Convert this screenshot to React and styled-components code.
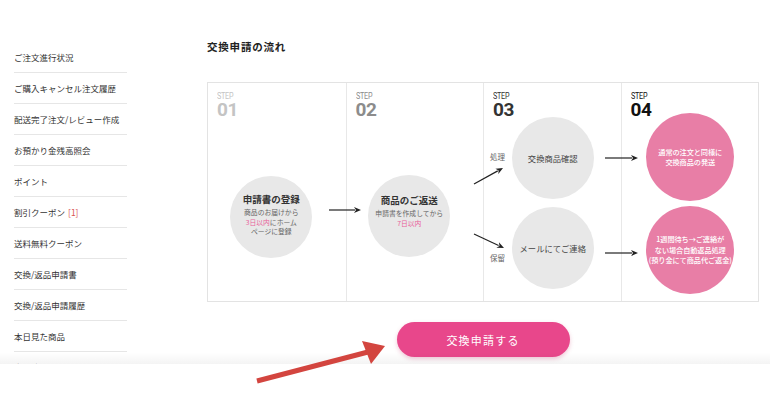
import React from "react";
import styled, { createGlobalStyle } from "styled-components";

const Global = createGlobalStyle`
  html, body { margin: 0; padding: 0; background: #fff; }
  body { font-family: "Noto Sans CJK JP", "Noto Sans", sans-serif; color: #333; }
`;

const Viewport = styled.div`
  width: 770px;
  height: 400px;
  position: relative;
  overflow: hidden;
  background: #fff;
`;

const Page = styled.div`
  height: 364px;
  overflow: hidden;
  display: flex;
  position: relative;
  &::after {
    content: "";
    position: absolute;
    left: 0;
    right: 0;
    bottom: 0;
    height: 12px;
    background: linear-gradient(to bottom, rgba(0,0,0,0), rgba(0,0,0,0.045));
  }
`;

const Sidebar = styled.ul`
  list-style: none;
  margin: 0 0 0 14px;
  padding: 42px 0 0;
  width: 113px;
  flex: none;
`;

const NavItem = styled.li`
  height: 30px;
  display: flex;
  align-items: center;
  border-bottom: 1px solid #e6e6e6;
  font-size: 8.5px;
  color: #333;
  white-space: nowrap;
`;

const Badge = styled.span`
  color: #d9534f;
  margin-left: 3px;
`;

const Main = styled.div`
  margin-left: 80px;
  width: 552px;
  padding-top: 40px;
  display: flex;
  flex-direction: column;
`;

const Title = styled.h2`
  margin: 0 0 28px;
  font-size: 10.5px;
  line-height: 14px;
  font-weight: 700;
  letter-spacing: 0.8px;
  color: #222;
`;

const FlowBox = styled.div`
  position: relative;
  height: 220px;
  box-sizing: border-box;
  border: 1px solid #e3e3e3;
  display: grid;
  grid-template-columns: repeat(4, 1fr);
`;

const Column = styled.div`
  display: flex;
  flex-direction: column;
  padding: 8px 8px 0 9px;
  border-left: ${(p) => (p.$first ? "none" : "1px solid #e8e8e8")};
  min-width: 0;
`;

const StepHead = styled.div`
  height: 28px;
  display: flex;
  flex-direction: column;
  align-items: flex-start;
  font-family: Roboto, "Liberation Sans", sans-serif;
  color: ${(p) => p.$color};
  position: relative;
  z-index: 1;
`;

const StepLabel = styled.span`
  display: block;
  height: 10px;
  font-size: 8.5px;
  line-height: 10px;
  letter-spacing: -0.3px;
  transform: scaleX(0.85);
  transform-origin: left;
`;

const StepNum = styled.span`
  display: block;
  height: 18px;
  font-size: 19px;
  line-height: 18px;
  font-weight: 700;
  letter-spacing: -0.3px;
`;

const Body = styled.div`
  display: flex;
  flex-direction: column;
  align-items: center;
  margin-top: ${(p) => p.$offset}px;
  gap: ${(p) => p.$gap || 0}px;
  padding-right: ${(p) => p.$shift || 0}px;
`;

const Circle = styled.div`
  width: ${(p) => p.$size}px;
  height: ${(p) => p.$size}px;
  border-radius: 50%;
  flex: none;
  background: ${(p) => (p.$pink ? "#e87ea6" : "#e8e8e8")};
  color: ${(p) => (p.$pink ? "#fff" : "#333")};
  display: flex;
  flex-direction: column;
  align-items: center;
  justify-content: center;
  text-align: center;
  box-sizing: border-box;
  padding: 0 4px;
`;

const CircleTitle = styled.div`
  font-size: 9.5px;
  font-weight: 700;
  line-height: 12px;
  color: #333;
  margin-bottom: 3px;
  margin-top: ${(p) => p.$mt || 0}px;
`;

const CircleSub = styled.div`
  font-size: 6.8px;
  line-height: 9.5px;
  color: #666;
  white-space: nowrap;
`;

const Em = styled.span`
  color: #e8609a;
`;

const CircleText = styled.div`
  font-size: 8.3px;
  line-height: 11px;
  color: #444;
  white-space: nowrap;
`;

const PinkText = styled.div`
  font-size: 7.2px;
  line-height: 10.5px;
  color: #fff;
  font-weight: 500;
  white-space: nowrap;
  letter-spacing: -0.1px;
`;

const Overlay = styled.svg`
  position: absolute;
  inset: 0;
  pointer-events: none;
  overflow: visible;
`;

const Tag = styled.span`
  position: absolute;
  left: ${(p) => p.$x}px;
  top: ${(p) => p.$y}px;
  font-size: 7.5px;
  line-height: 10px;
  color: #666;
  white-space: nowrap;
`;

const ButtonRow = styled.div`
  display: flex;
  justify-content: center;
  margin-top: 20px;
`;

const ApplyButton = styled.button`
  width: 173px;
  height: 35px;
  border: none;
  border-radius: 18px;
  background: #e8478b;
  color: #fff;
  font-family: "Noto Sans CJK JP", sans-serif;
  font-size: 11px;
  letter-spacing: 1.2px;
  box-shadow: 0 2px 4px rgba(200, 40, 100, 0.25);
  cursor: pointer;
`;

const Annotation = styled.svg`
  position: absolute;
  left: 0;
  top: 0;
  width: 770px;
  height: 400px;
  pointer-events: none;
`;

const navItems = [
  "ご注文進行状況",
  "ご購入キャンセル注文履歴",
  "配送完了注文/レビュー作成",
  "お預かり金残高照会",
  "ポイント",
  "割引クーポン",
  "送料無料クーポン",
  "交換/返品申請書",
  "交換/返品申請履歴",
  "本日見た商品",
  "会員情報修正",
];

function Arrow({ x1, y1, x2, y2 }) {
  const ang = Math.atan2(y2 - y1, x2 - x1);
  const len = 7;
  const w = 3;
  const bx = x2 - len * Math.cos(ang);
  const by = y2 - len * Math.sin(ang);
  const px = -Math.sin(ang) * w;
  const py = Math.cos(ang) * w;
  return (
    <g>
      <line x1={x1} y1={y1} x2={bx + 1 * Math.cos(ang)} y2={by + 1 * Math.sin(ang)} stroke="#222" strokeWidth="1.2" />
      <polygon
        points={`${x2},${y2} ${bx + px},${by + py} ${bx + 2 * Math.cos(ang)},${by + 2 * Math.sin(ang)} ${bx - px},${by - py}`}
        fill="#222"
      />
    </g>
  );
}

export default function App() {
  return (
    <Viewport>
      <Global />
      <Page>
        <Sidebar>
          {navItems.map((t) => (
            <NavItem key={t}>
              {t}
              {t === "割引クーポン" && <Badge>[1]</Badge>}
            </NavItem>
          ))}
        </Sidebar>
        <Main>
          <Title>交換申請の流れ</Title>
          <FlowBox>
            <Column $first>
              <StepHead $color="#c4c4c4">
                <StepLabel>STEP</StepLabel>
                <StepNum>01</StepNum>
              </StepHead>
              <Body $offset={57} $shift={12}>
                <Circle $size={82}>
                  <CircleTitle $mt={-4}>申請書の登録</CircleTitle>
                  <CircleSub>商品のお届けから</CircleSub>
                  <CircleSub>
                    <Em>3日以内</Em>にホーム
                  </CircleSub>
                  <CircleSub>ページに登録</CircleSub>
                </Circle>
              </Body>
            </Column>
            <Column>
              <StepHead $color="#8c8c8c">
                <StepLabel>STEP</StepLabel>
                <StepNum>02</StepNum>
              </StepHead>
              <Body $offset={56} $shift={12}>
                <Circle $size={82}>
                  <CircleTitle $mt={-10}>商品のご返送</CircleTitle>
                  <CircleSub>申請書を作成してから</CircleSub>
                  <CircleSub>
                    <Em>7日以内</Em>
                  </CircleSub>
                </Circle>
              </Body>
            </Column>
            <Column>
              <StepHead $color="#333">
                <StepLabel>STEP</StepLabel>
                <StepNum>03</StepNum>
              </StepHead>
              <Body $offset={-2} $gap={8}>
                <Circle $size={82}>
                  <CircleText>交換商品確認</CircleText>
                </Circle>
                <Circle $size={82}>
                  <CircleText>メールにてご連絡</CircleText>
                </Circle>
              </Body>
            </Column>
            <Column>
              <StepHead $color="#111">
                <StepLabel>STEP</StepLabel>
                <StepNum>04</StepNum>
              </StepHead>
              <Body $offset={-6} $gap={5}>
                <Circle $size={88} $pink>
                  <PinkText>通常の注文と同様に</PinkText>
                  <PinkText>交換商品の発送</PinkText>
                </Circle>
                <Circle $size={88} $pink>
                  <PinkText>1週間待ち→ご連絡が</PinkText>
                  <PinkText>ない場合自動返品処理</PinkText>
                  <PinkText>(預り金にて商品代ご返金)</PinkText>
                </Circle>
              </Body>
            </Column>
            <Overlay width="552" height="220">
              <Arrow x1={121} y1={127} x2={153} y2={127} />
              <Arrow x1={266} y1={101} x2={295} y2={85} />
              <Arrow x1={266} y1={151} x2={296} y2={165} />
              <Arrow x1={397} y1={75} x2={430} y2={75} />
              <Arrow x1={397} y1={170} x2={430} y2={170} />
            </Overlay>
            <Tag $x={282} $y={69}>処理</Tag>
            <Tag $x={282} $y={170}>保留</Tag>
          </FlowBox>
          <ButtonRow>
            <ApplyButton>交換申請する</ApplyButton>
          </ButtonRow>
        </Main>
      </Page>
      <Annotation viewBox="0 0 770 400">
        <line x1="257" y1="381" x2="368" y2="352" stroke="#d3453f" strokeWidth="5" />
        <polygon points="385,346 362,341 371,364" fill="#d3453f" />
      </Annotation>
    </Viewport>
  );
}
